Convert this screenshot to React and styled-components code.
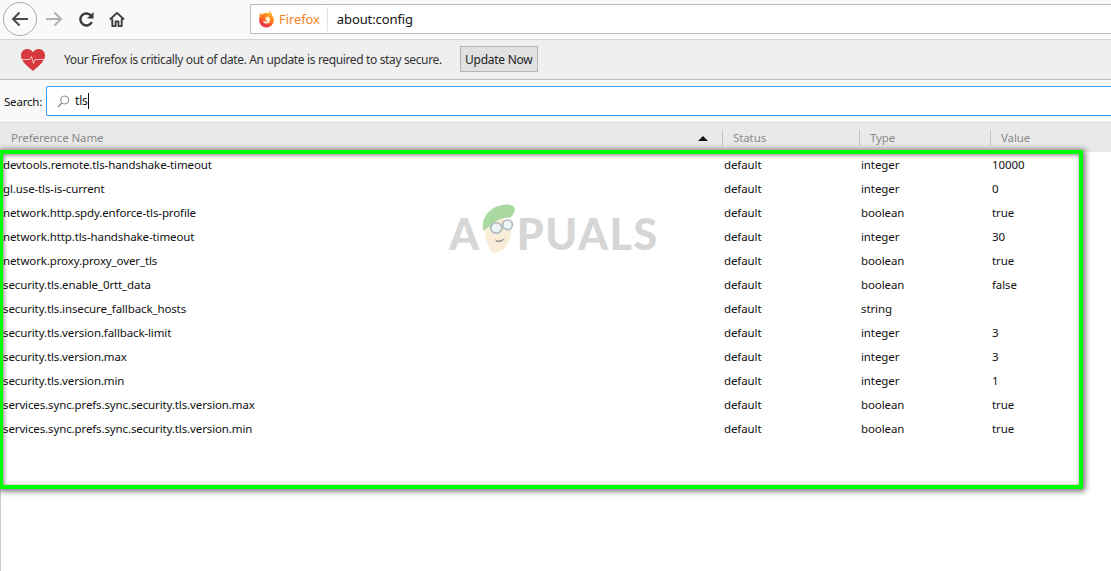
import React from "react";
import styled, { createGlobalStyle } from "styled-components";

const Global = createGlobalStyle`
  html, body { margin: 0; padding: 0; background: #fff; overflow: hidden; }
  body { font-family: "Noto Sans", "Open Sans", sans-serif; }
`;
const Page = styled.div`
  position: relative; width: 1111px; height: 571px; overflow: hidden; background: #fff;
  display: flex; flex-direction: column;
`;
const Toolbar = styled.div`
  height: 39px; box-sizing: content-box; background: #f9f9f9; border-bottom: 1px solid #d4d4d4;
  display: flex; align-items: center; padding-left: 3px;
`;
const BackButton = styled.div`
  width: 32px; height: 32px; border: 1px solid #a9a9a9; border-radius: 50%; background: #fbfbfb;
  display: flex; align-items: center; justify-content: center; margin-top: -1px;
`;
const NavIcon = styled.div`
  display: flex; margin-left: ${p => p.$ml}px; margin-top: -1px;
`;
const UrlBar = styled.div`
  margin-left: 125px; margin-top: -2px; flex: 1; height: 28px; background: #fff;
  border: 1px solid #bcbcbc; border-right: none; border-radius: 2px 0 0 2px;
  display: flex; align-items: center; padding-left: 7px;
`;
const Identity = styled.span`
  font-size: 13px; color: #f3842a; margin-left: 4px; padding-right: 7px; margin-right: 9px;
  border-right: 1px solid #e2e2e2; line-height: 24px; letter-spacing: -0.1px;
`;
const Url = styled.span`
  font-size: 13px; color: #111; letter-spacing: -0.1px;
`;
const Notice = styled.div`
  height: 39px; background: #efefef; border-bottom: 1px solid #bdbdbd;
  display: flex; align-items: center; padding-left: 20px;
`;
const NoticeText = styled.span`
  font-size: 12px; color: #333; margin-left: 18px; letter-spacing: -0.36px; white-space: nowrap;
`;
const UpdateButton = styled.div`
  margin-left: 18px; margin-top: -1px; width: 78px; height: 26px; box-sizing: border-box; background: #e1e1e1;
  border: 1px solid #b4b4b4; font-size: 12px; color: #222; letter-spacing: -0.25px;
  display: flex; align-items: center; justify-content: center;
`;
const SearchRow = styled.div`
  height: 42px; background: #f9f9f9; display: flex; align-items: center; padding-left: 4px;
`;
const SearchLabel = styled.label`
  font-size: 11.5px; color: #111; width: 42px; letter-spacing: -0.2px;
`;
const SearchBox = styled.div`
  flex: 1; height: 28px; background: #fff; border: 1px solid #3a9af0; border-right: none;
  border-radius: 2px 0 0 2px; display: flex; align-items: center; padding-left: 10px;
`;
const SearchValue = styled.span`
  font-size: 12px; color: #222; margin-left: 5px; border-right: 1px solid #111;
  line-height: 16px; letter-spacing: -0.2px;
`;
const HeaderRow = styled.div`
  height: 29px; background: #e9e9e9; border-top: 1px solid #dcdcdc; display: grid;
  grid-template-columns: 722px 137px 131px 1fr; align-items: center;
`;
const HeaderCell = styled.div`
  height: 16px; box-sizing: border-box; font-size: 11.5px; color: #8a8a8a; line-height: 16px;
  padding-left: ${p => p.$first ? 11 : 10}px; border-left: ${p => p.$first ? "none" : "1px solid #c4c4c4"};
  display: flex; align-items: center; justify-content: space-between; margin-top: 1px;
  letter-spacing: -0.1px;
`;
const SortArrow = styled.span`
  width: 0; height: 0; border-left: 5px solid transparent; border-right: 5px solid transparent;
  border-bottom: 5px solid #111; margin-right: 14px;
`;
const Rows = styled.div`
  flex: 1; border-left: 1px solid #cfcfd4;
`;
const Row = styled.div`
  height: 24px; display: grid; grid-template-columns: 721px 137px 131px 1fr; align-items: center;
  font-size: 11.5px; color: #111; padding-left: 2px;
`;
const NameCell = styled.span`
  letter-spacing: -0.12px; white-space: nowrap;
`;
const Cell = styled.span`
  letter-spacing: -0.1px;
`;
const Highlight = styled.div`
  position: absolute; left: -1px; top: 150px; width: 1084px; height: 339px; box-sizing: border-box;
  border: 4px solid #00ff00;
  box-shadow: 1px 1px 6px 1px rgba(0,0,0,.6), inset 1px 1px 4px rgba(0,0,0,.5);
  pointer-events: none;
`;
const Watermark = styled.div`
  position: absolute; left: 449px; top: 204px; display: flex; align-items: center; pointer-events: none;
  font-family: "Lato", sans-serif; font-weight: 900; font-size: 43px; line-height: 60px; color: #d6d6d6;
  letter-spacing: 1.5px;
`;
const Mascot = styled.svg`
  margin: -12px -1px 0 0;
`;

const data = [
  ["devtools.remote.tls-handshake-timeout", "integer", "10000"],
  ["gl.use-tls-is-current", "integer", "0"],
  ["network.http.spdy.enforce-tls-profile", "boolean", "true"],
  ["network.http.tls-handshake-timeout", "integer", "30"],
  ["network.proxy.proxy_over_tls", "boolean", "true"],
  ["security.tls.enable_0rtt_data", "boolean", "false"],
  ["security.tls.insecure_fallback_hosts", "string", ""],
  ["security.tls.version.fallback-limit", "integer", "3"],
  ["security.tls.version.max", "integer", "3"],
  ["security.tls.version.min", "integer", "1"],
  ["services.sync.prefs.sync.security.tls.version.max", "boolean", "true"],
  ["services.sync.prefs.sync.security.tls.version.min", "boolean", "true"],
];

const Arrow = ({ color, flip }) => (
  <svg width="18" height="16" viewBox="0 0 18 16" fill="none" stroke={color} strokeWidth="2"
    style={flip ? { transform: "scaleX(-1)" } : undefined}>
    <path d="M17 8H2M8.500 1.500L2 8l6.500 6.500" />
  </svg>
);
const Reload = () => (
  <svg width="17" height="17" viewBox="0 0 17 17" fill="none" stroke="#3c3c3c" strokeWidth="2.400">
    <path d="M13.800 11a6 6 0 1 1-.5-6" />
    <path d="M15.500 1v6.500H9z" fill="#3c3c3c" stroke="none" />
  </svg>
);
const Home = () => (
  <svg width="16" height="17" viewBox="0 0 17 17" fill="none" stroke="#3c3c3c" strokeWidth="2" strokeLinejoin="round">
    <path d="M1 8.500L8.500 1.500 16 8.500" />
    <path d="M3.500 7.500V15.500h3.500V10.500h3V15.500h3.500V7.500" />
  </svg>
);
const FirefoxLogo = () => (
  <svg width="17" height="18" viewBox="0 0 16 17">
    <defs>
      <linearGradient id="ff" x1="0.8" y1="0" x2="0.2" y2="1">
        <stop offset="0" stopColor="#ffc021" />
        <stop offset="0.5" stopColor="#ff6a1f" />
        <stop offset="1" stopColor="#e3195f" />
      </linearGradient>
    </defs>
    <circle cx="8" cy="9.500" r="7" fill="url(#ff)" />
    <path d="M10 0.500c2 1.500 3 3 3.500 5L11 5c0-2 -.5-3.200-1-4.500z" fill="#ffb01f" />
    <path d="M2 2.500c-.5 1.500-.8 3-.5 5L4.500 6C3.500 5 2.500 4 2 2.500z" fill="#ff8a1f" />
    <path d="M8.200 6.200a3.300 3.300 0 1 1-3.400 3.600c1 1.300 3.300 1.500 4.200.3C7.500 10 6.500 9 7 7.500z" fill="#fff3d0" />
  </svg>
);
const Heart = () => (
  <svg width="26" height="24" viewBox="0 0 26 24">
    <path d="M13 23C7 18 1 13 1 7.500 1 3.500 4 1 7.300 1 9.800 1 12 2.300 13 4.300 14 2.300 16.200 1 18.700 1 22 1 25 3.500 25 7.500 25 13 19 18 13 23z" fill="#d8383f" />
    <path d="M1 11.500h9l1.500-3 2 7 1.500-4h10" fill="none" stroke="#f6cfd0" strokeWidth="0.900" />
  </svg>
);
const SearchIcon = () => (
  <svg width="13" height="13" viewBox="0 0 13 13" fill="none" stroke="#8c8c8c" strokeWidth="1">
    <circle cx="7.800" cy="5" r="4" />
    <path d="M4.800 8L1 12" strokeWidth="1.300" />
  </svg>
);
const MascotArt = () => (
  <Mascot width="37" height="50" viewBox="0 0 46 62">
    <path d="M12 60C6 48 3 36 5 26L24 16 38 30c0 10-3 20-10 27-5 5-12 6-16 3z" fill="#f9ecd9" />
    <path d="M3 34C-1 20 10 4 28 2c8-1 14 1 14 6-1 6-3 8-6 10-9 0-17 3-22 8-3 3-6 5-11 8z" fill="#a9d8a0" />
    <g fill="#eef5f7" stroke="#aab7bc" strokeWidth="2">
      <ellipse cx="19" cy="31" rx="7" ry="6.500" />
      <ellipse cx="33" cy="27" rx="6" ry="6" />
    </g>
    <path d="M17 45c4 3 10 2 13-3-2 7-10 9-13 3z" fill="#8f8f8f" />
  </Mascot>
);

export default function App() {
  return (
    <Page>
      <Global />
      <Toolbar>
        <BackButton><Arrow color="#4a4a4a" /></BackButton>
        <NavIcon $ml={8}><Arrow color="#b0b0b0" flip /></NavIcon>
        <NavIcon $ml={15}><Reload /></NavIcon>
        <NavIcon $ml={14}><Home /></NavIcon>
        <UrlBar>
          <FirefoxLogo />
          <Identity>Firefox</Identity>
          <Url>about:config</Url>
        </UrlBar>
      </Toolbar>
      <Notice>
        <Heart />
        <NoticeText>Your Firefox is critically out of date. An update is required to stay secure.</NoticeText>
        <UpdateButton>Update Now</UpdateButton>
      </Notice>
      <SearchRow>
        <SearchLabel>Search:</SearchLabel>
        <SearchBox>
          <SearchIcon />
          <SearchValue>tls</SearchValue>
        </SearchBox>
      </SearchRow>
      <HeaderRow>
        <HeaderCell $first>Preference Name<SortArrow /></HeaderCell>
        <HeaderCell>Status</HeaderCell>
        <HeaderCell>Type</HeaderCell>
        <HeaderCell>Value</HeaderCell>
      </HeaderRow>
      <Rows>
        {data.map(([name, type, value]) => (
          <Row key={name}>
            <NameCell>{name}</NameCell>
            <Cell>default</Cell>
            <Cell>{type}</Cell>
            <Cell>{value}</Cell>
          </Row>
        ))}
      </Rows>
      <Watermark>A<MascotArt />PUALS</Watermark>
      <Highlight />
    </Page>
  );
}
